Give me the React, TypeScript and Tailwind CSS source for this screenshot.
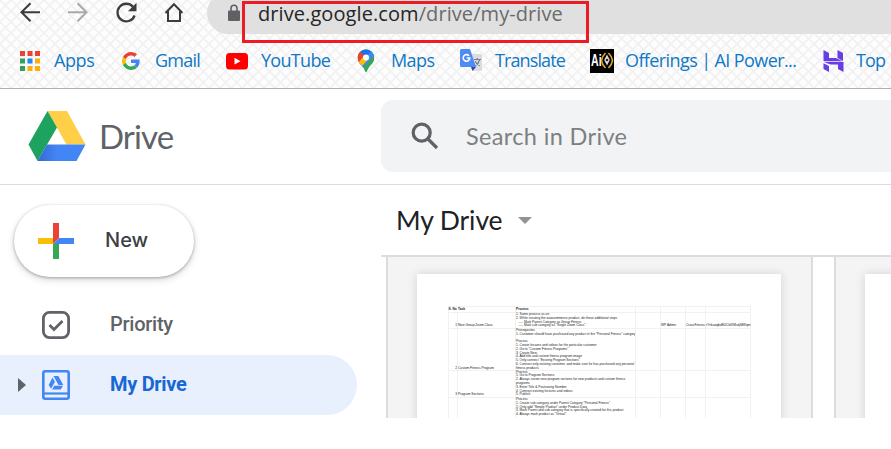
import React from "react";

const segoe = "font-['Open_Sans','Noto_Sans',sans-serif]";

function Bookmark({ icon, label, w, iw, track }: { icon: React.ReactNode; label: string; w: string; iw: string; track: string }) {
  return (
    <div className={`flex h-full shrink-0 items-center ${w}`}>
      <span className={`flex shrink-0 items-center ${iw}`}>{icon}</span>
      <span className={`pb-px whitespace-nowrap text-[18px] leading-[24px] text-[#0f78c6] ${track}`}>{label}</span>
    </div>
  );
}

const appColors = ["#ea4335", "#ea4335", "#ea4335", "#34a05a", "#1e88f5", "#fbaf0a", "#34a05a", "#fbaf0a", "#fbaf0a"];

function AppsIcon() {
  return (
    <svg width="20" height="20" viewBox="0 0 20 20">
      {appColors.map((c, i) => (
        <rect key={i} x={(i % 3) * 7.5} y={Math.floor(i / 3) * 7.5} width="5" height="5" fill={c} />
      ))}
    </svg>
  );
}

function GoogleIcon() {
  return (
    <svg width="18" height="18" viewBox="0 0 48 48">
      <path fill="#EA4335" d="M24 9.5c3.54 0 6.71 1.22 9.21 3.6l6.85-6.85C35.9 2.38 30.47 0 24 0 14.62 0 6.51 5.38 2.56 13.22l7.98 6.19C12.43 13.72 17.74 9.5 24 9.5z" />
      <path fill="#4285F4" d="M46.98 24.55c0-1.57-.15-3.09-.38-4.55H24v9.02h12.94c-.58 2.96-2.26 5.48-4.78 7.18l7.73 6c4.51-4.18 7.09-10.36 7.09-17.65z" />
      <path fill="#FBBC05" d="M10.53 28.59c-.48-1.45-.76-2.99-.76-4.59s.27-3.14.76-4.59l-7.98-6.19C.92 16.46 0 20.12 0 24c0 3.88.92 7.54 2.56 10.78l7.97-6.19z" />
      <path fill="#34A853" d="M24 48c6.48 0 11.93-2.13 15.89-5.81l-7.73-6c-2.15 1.45-4.92 2.3-8.16 2.3-6.26 0-11.57-4.22-13.47-9.91l-7.98 6.19C6.51 42.62 14.62 48 24 48z" />
    </svg>
  );
}

function YouTubeIcon() {
  return (
    <svg className="mt-px" width="22" height="17" viewBox="0 0 22 17">
      <rect width="22" height="16.5" rx="3.5" fill="#f00" />
      <path d="M8.5 4.8 14.5 8.2 8.5 11.6z" fill="#fff" />
    </svg>
  );
}

function MapsIcon() {
  return (
    <svg width="18" height="24" viewBox="0 0 18 24">
      <defs>
        <clipPath id="pin">
          <path d="M9 .5C4.2.5.8 4.2.8 8.7c0 3.2 1.7 5.3 3.7 7.6C6.700 18.600 7.500 20.300 8.100 22.300c.3 1.300 1.500 1.300 1.800 0 .6-2 1.400-3.600 3.500-6 2-2.300 3.800-4.400 3.800-7.600C17.200 4.200 13.800.5 9 .5z" />
        </clipPath>
      </defs>
      <g clipPath="url(#pin)">
        <path d="M0 0h18v24H0z" fill="#34a853" />
        <path d="M0 0h9v9L2 18 0 14z" fill="#ea4335" />
        <path d="M3.200 3 9 9 17 0H6z" fill="#1a73e8" />
        <path d="m6.700 10.600 8.500-9.500L18 5v1L4 22 0 13z" fill="#4285f4" />
        <path d="M0 9.500V16l4.500 1.500L11.500 10 6.700 6.800 1.500 13z" fill="#fbbc04" />
        <path d="M0 3v9l2 .5L7 6.700 3 3z" fill="#ea4335" />
        <path d="m17 6-13 16h14z" fill="#34a853" />
      </g>
      <circle cx="9" cy="8.500" r="3" fill="#fff" />
    </svg>
  );
}

function TranslateIcon() {
  return (
    <svg width="22" height="23" viewBox="0 0 22 23">
      <path d="M9 5h12a1 1 0 0 1 1 1v15a1 1 0 0 1-1 1h-8z" fill="#dadce0" />
      <path d="m11 18 5 0-3.500 4z" fill="#3742ad" />
      <path d="M1.500 0H10l6 18H1.500A1.500 1.500 0 0 1 0 16.500v-15A1.500 1.500 0 0 1 1.500 0z" fill="#4d8bf5" />
      <path d="M9 6.800A3.300 3.300 0 1 0 9.800 9H6.700" fill="none" stroke="#fff" strokeWidth="1.600" />
      <path d="M14 10.500h7M17.300 9v1.500M19.500 11c-.6 2.500-2.300 4.600-4.300 5.800M15.200 12.300c.8 2 2.600 3.700 4.500 4.500" fill="none" stroke="#6f7f8d" strokeWidth="1.200" />
    </svg>
  );
}

function AiIcon() {
  return (
    <span className="relative flex h-6 w-6 items-center bg-black pl-px">
      <span className="origin-left scale-x-[.66] font-['Liberation_Sans',sans-serif] text-[16px] leading-6 font-bold text-white">Ai</span>
      <svg className="absolute top-0 right-0" width="14" height="24" viewBox="0 0 14 24">
        <path d="M5.500 4C3.500 6 1.800 8.500 1.500 11.500c.3 3 2 5.500 4 7.500M8.500 4c2 2 3.700 4.500 4 7.500-.3 3-2 5.500-4 7.500" fill="none" stroke="#d9a52c" strokeWidth="1.700" />
        <path d="M7 5.500 9.800 11 7 16.500 4.200 11z" fill="#ddd" />
        <circle cx="7" cy="11" r="1.300" fill="#222" />
      </svg>
    </span>
  );
}

function HIcon() {
  return (
    <svg width="21" height="22" viewBox="0 0 21 22" fill="#673de6">
      <path d="M.5 0 6 3v5h7l6.500 3.200H.5zM14.500 0 20 3v8l-5.500-3zM.5 13.200 6 16v6L.5 19zM1 12h19.500v10L15 19v-4.500H7.500z" />
    </svg>
  );
}

function Toolbar() {
  return (
    <header className={`h-[89px] overflow-hidden border-b border-[#b0b0b0] bg-[#fdfdfd] bg-[linear-gradient(45deg,transparent_44%,#f1f1f1_46%_54%,transparent_56%),linear-gradient(-45deg,transparent_44%,#f1f1f1_46%_54%,transparent_56%)] bg-[length:11px_11px] ${segoe}`}>
      <div className="flex h-[34px] pl-5">
        <svg className="w-[187px] shrink-0" height="34" viewBox="20 0 187 34" fill="none" stroke="#3c3c3c" strokeWidth="2">
          <path d="M40 12.300H22M30.500 3.200l-9 9 9 9" />
          <path d="M68 12.300h18M77.500 3.200l9 9-9 9" stroke="#a9a9a9" />
          <path d="M132.800 6.600A8.800 8.800 0 1 0 134.600 15.500" strokeWidth="2.300" />
          <path d="M136.500 2.800v8.400h-8.600z" fill="#3c3c3c" stroke="none" />
          <path d="m165.500 13 8.500-8.700 8.500 8.700M168 11v10h12V11" />
        </svg>
        <div className="-mt-2 flex h-[42px] flex-1 items-center rounded-l-[21px] bg-[#e0e0e0] pl-[21px]">
          <svg className="shrink-0" width="12" height="18" viewBox="0 0 12 18">
            <rect y="6.500" width="12" height="10.500" rx="1" fill="#5f6063" />
            <path d="M3 7V4.300a3 3 0 0 1 6 0V7" fill="none" stroke="#5f6063" strokeWidth="1.600" />
          </svg>
          <span className="ml-[18px] pt-[2px] text-[20px] leading-[28px] tracking-[.08px] whitespace-nowrap text-[#6b6b6b]">
            <span className="text-[#252525]">drive.google.com</span>/drive/my-drive
          </span>
        </div>
      </div>
      <div className="flex h-[53px] pl-5">
        <Bookmark icon={<AppsIcon />} label="Apps" w="w-[102px]" iw="w-[34px]" track="tracking-[-.4px]" />
        <Bookmark icon={<GoogleIcon />} label="Gmail" w="w-[104px]" iw="w-[33px]" track="tracking-[-.75px]" />
        <Bookmark icon={<YouTubeIcon />} label="YouTube" w="w-[131px]" iw="w-[35px]" track="tracking-[-.7px]" />
        <Bookmark icon={<MapsIcon />} label="Maps" w="w-[103px]" iw="w-[34px]" track="tracking-[-.6px]" />
        <Bookmark icon={<TranslateIcon />} label="Translate" w="w-[130px]" iw="w-[35px]" track="tracking-[-.9px]" />
        <Bookmark icon={<AiIcon />} label="Offerings | AI Power..." w="w-[233px]" iw="w-[35px]" track="tracking-[-.6px]" />
        <Bookmark icon={<HIcon />} label="Top" w="w-[68px]" iw="w-[33px]" track="tracking-[-.9px]" />
      </div>
    </header>
  );
}

function DriveHeader() {
  return (
    <div className="flex h-24 items-center border-b border-[#d9dbde] pb-px pl-7">
      <svg className="shrink-0" width="58" height="50" viewBox="0 0 58 50">
        <defs>
          <linearGradient id="blueShade" x1="0" x2="1">
            <stop offset="0" stopColor="#3568d4" />
            <stop offset=".4" stopColor="#4285f4" />
          </linearGradient>
        </defs>
        <path d="M19.500 0H39l18.500 33.500H38.500z" fill="#ffcf48" />
        <path d="M19.500 0 29 16.500 9.500 50 .5 33.500z" fill="#1da260" />
        <path d="M19 33.500h38.500L48.500 50h-39z" fill="url(#blueShade)" />
      </svg>
      <span className="ml-[13px] w-[282px] shrink-0 font-[Lato,sans-serif] text-[33px] leading-[40px] tracking-[-.9px] text-[#5f6368]">Drive</span>
      <div className="flex h-[72px] flex-1 items-center rounded-l-xl bg-[#f1f3f4] pl-[30px]">
        <svg className="shrink-0" width="28" height="28" viewBox="0 0 28 28" fill="none" stroke="#5f6368" strokeWidth="3.200">
          <circle cx="10.700" cy="10.700" r="8.500" />
          <path d="m16.500 16.500 9.500 9.500" />
        </svg>
        <span className="ml-[27px] font-[Lato,sans-serif] text-[23.500px] leading-8 tracking-[.36px] whitespace-nowrap text-[#7d7f81]">Search in Drive</span>
      </div>
    </div>
  );
}

function Sidebar() {
  return (
    <aside className="w-[381px] shrink-0 font-[Roboto,sans-serif] text-[20px] font-medium text-[#5f6368]">
      <button className="mt-5 ml-3.5 flex h-[72px] w-[180px] items-center rounded-full bg-white pl-6 shadow-[0_1px_3px_rgba(60,64,67,.4),0_3px_6px_1px_rgba(60,64,67,.15)]">
        <svg className="shrink-0" width="36" height="36" viewBox="0 0 36 36">
          <path d="M15 0h6v15l-6 6z" fill="#ea4335" />
          <path d="M0 15h15v6H0z" fill="#fbbc04" />
          <path d="M15 21h6v15h-6z" fill="#34a853" />
          <path d="M21 15h15v6H15z" fill="#4285f4" />
        </svg>
        <span className="ml-[31px] pb-[3px] font-[Inter,sans-serif] text-[20px] font-medium text-[#3c4043]">New</span>
      </button>
      <div className="mt-[18px] flex h-[60px] items-center pl-[42px]">
        <svg className="shrink-0" width="28" height="28" viewBox="0 0 28 28" fill="none" stroke="#5f6368">
          <rect x="1.400" y="1.400" width="25.200" height="25.200" rx="6" strokeWidth="2.800" />
          <path d="m7.500 14 4.500 4.500 8.500-8.500" strokeWidth="2.800" />
        </svg>
        <span className="ml-[40px] pb-[2px] tracking-[-.25px]">Priority</span>
      </div>
      <div className="flex h-[60px] w-[357px] items-center rounded-r-full bg-[#e8f0fe] pl-[18px] text-[#1967d2]">
        <svg className="shrink-0" width="8" height="14" viewBox="0 0 8 14"><path d="M0 0v14l8-7z" fill="#5f6368" /></svg>
        <svg className="ml-4 shrink-0" width="28" height="30" viewBox="0 0 28 30">
          <rect x="1.300" y="1.300" width="25.400" height="27.400" rx="2" fill="none" stroke="#4285f4" strokeWidth="2.600" />
          <path d="M1 23.500h26" stroke="#4285f4" strokeWidth="2.200" />
          <path d="M11.500 6h4.800l5 9h-4.800zM10.500 7.500l2.400 4.200-3.800 7L6.700 15zM12.200 15.800H21L18.700 19.500h-8.500z" fill="#4285f4" />
        </svg>
        <span className="ml-[40px] pb-[2px] font-bold tracking-[-.3px]">My Drive</span>
      </div>
    </aside>
  );
}

const sections = [
  { n: "1", task: "New Group Zoom Class", h: "h-[16px]", lines: ["1. Same process as on", "2. While creating the woocommerce product, do these additional steps", "   ---- Mark Parent Category as Group Fitness", "   ---- Mark sub category as \"Single Zoom Class\""] },
  { n: "2", task: "Custom Fitness Program", h: "h-[41.6px]", lines: ["Prerequisites", "1. Customer should have purchased any product in the \"Personal Fitness\" category", " ", "Process", "1. Create lessons and videos for the particular customer", "2. Go to \"Custom Fitness Programs\"", "3. Create New", "4. Add title and custom fitness program image", "5. Only connect \"Existing Program Sections\"", "6. Connect only existing customer, and make sure he has purchased any personal", "fitness products"] },
  { n: "3", task: "Program Sections", h: "h-[27.400px]", lines: ["Process", "1. Go to Program Sections", "2. Always create new program sections for new products and custom fitness", "programs", "3. Enter Title & Positioning Number", "4. Connect existing lectures and videos", "5. Publish"] },
  { n: "", task: "", h: "h-[27px]", lines: ["Process", "1. Create sub category under Parent Category \"Personal Fitness\"", "2. Only add \"Simple Product\" under Product Data", "3. Mark Parent and sub category that is specifically created for this product", "4. Always mark product as \"Virtual\""] },
];

const cols = "grid w-[303px] grid-cols-[9.500px_58px_120px_25px_25px_20px_45px] border-b border-[#f1f1f1]";
const cell = "border-l border-[#f1f1f1]";

function Sheet() {
  return (
    <div className="mt-[31px] ml-[30.500px] w-[303px] border-t border-r border-[#f1f1f1] font-['Liberation_Sans',sans-serif] text-[3.250px] leading-[3.780px] whitespace-pre text-[#222]">
      <div className={`${cols} h-[6px] items-stretch leading-[5.500px] font-bold`}>
        <span className={cell}>S. No</span><span className="pl-[1px]">Task</span><span className={cell}>Process</span>
        <span className={cell} /><span className={cell} /><span className={cell} /><span className={cell} />
      </div>
      {sections.map((s, i) => (
        <div key={i} className={`${cols} ${s.h}`}>
          <span className={`${cell} flex items-end justify-end`}>{s.n}</span>
          <span className={`${cell} flex items-end`}>{s.task}</span>
          <span className={cell}>{s.lines.map((l, j) => <span key={j} className="block">{l}</span>)}</span>
          <span className={cell} />
          <span className={`${cell} flex items-end`}>{i === 0 ? "WP Admin" : ""}</span>
          <span className={`${cell} flex items-end`}>{i === 0 ? "CrossFitness" : ""}</span>
          <span className={`${cell} flex items-end`}>{i === 0 ? "rYnkaoqbdMJCbIXMsdjMWqm" : ""}</span>
        </div>
      ))}
    </div>
  );
}

function Content() {
  return (
    <main className="flex min-w-0 flex-1 flex-col">
      <div className="flex h-[70px] shrink-0 items-center pl-[15px]">
        <h1 className="w-[122px] pb-px font-[Lato,sans-serif] text-[26.500px] leading-9 tracking-[-.1px] whitespace-nowrap text-[#202124]">My Drive</h1>
        <svg className="mt-px" width="14" height="7" viewBox="0 0 14 7"><path d="M0 0h14L7 7z" fill="#919395" /></svg>
      </div>
      <div className="flex min-h-0 flex-1 justify-between border-t-2 border-[#dadce0] pl-[5px]">
        <section className="w-[427px] overflow-hidden border-x-2 border-[#dadce0] bg-[#f4f4f4] pt-[17px] pl-[29px]">
          <div className="h-[160px] w-[364px] overflow-visible bg-white pt-px shadow-[0_0_9px_rgba(0,0,0,.14)]"><Sheet /></div>
        </section>
        <section className="w-[57px] overflow-hidden border-l-2 border-[#dadce0] bg-[#f4f4f4] pt-[17px] pl-[29px]">
          <div className="h-[160px] w-[364px] bg-white shadow-[0_0_9px_rgba(0,0,0,.14)]" />
        </section>
      </div>
    </main>
  );
}

export default function App() {
  return (
    <div className="relative h-[449px] w-[891px] overflow-hidden bg-white">
      <Toolbar />
      <DriveHeader />
      <div className="flex h-[233px] overflow-hidden">
        <Sidebar />
        <Content />
      </div>
      <div className="absolute top-px left-[242px] h-[42px] w-[347px] border-3 border-[#ed1c24]" />
    </div>
  );
}
